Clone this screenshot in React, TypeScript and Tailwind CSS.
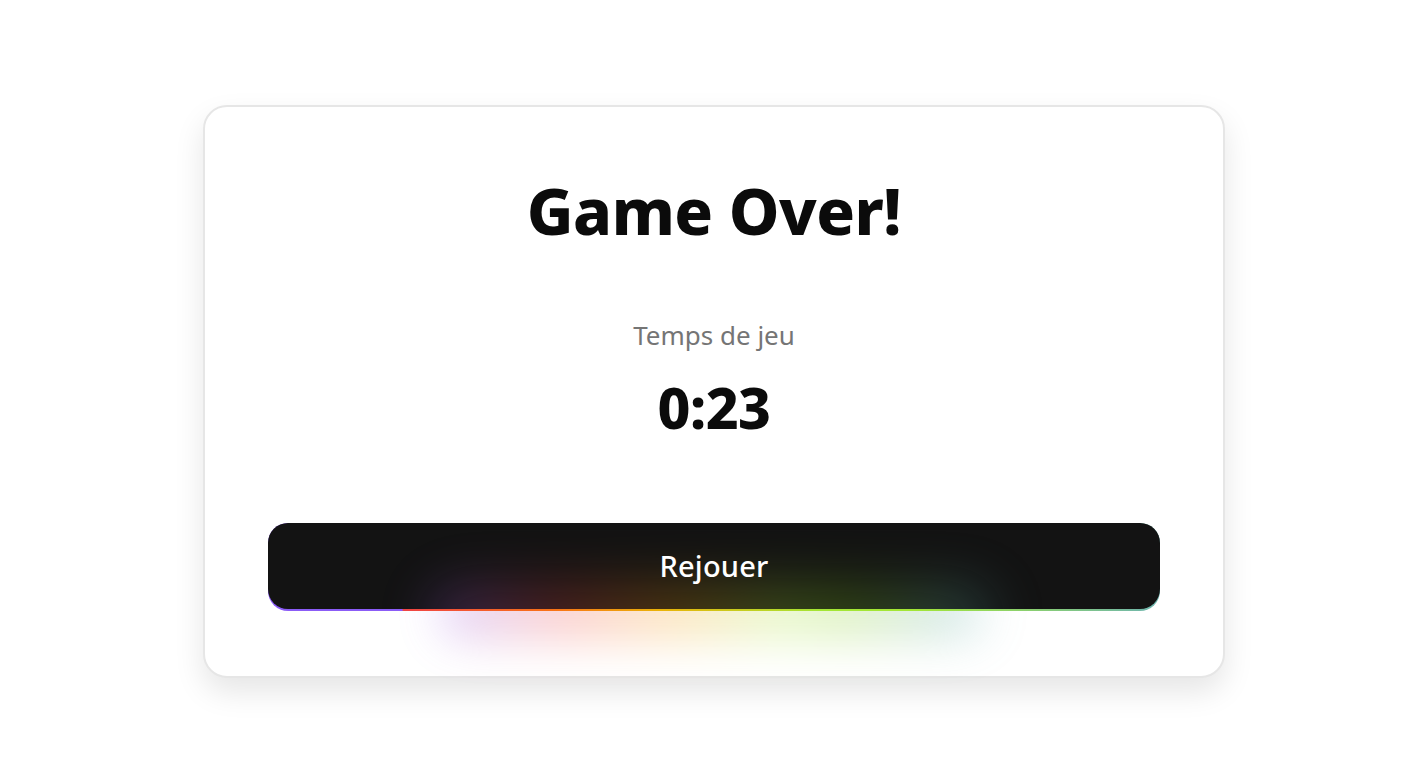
import { FC } from 'react';

const glowBg = "bg-[linear-gradient(90deg,#8b5cf6_0%,#ef4444_22%,#f59e0b_42%,#a3e635_62%,#84cc16_72%,#5eaaa8_92%,transparent_100%)]"

const ReplayButton: FC = () => {
    return (
        <div className="relative">
            {/* glow spilling below the button */}
            <div className={"absolute left-[170px] right-[160px] top-[62px] h-[56px] rounded-full blur-[22px] opacity-25 " + glowBg}></div>
            <div className="relative rounded-[20px] pb-[2px] bg-[linear-gradient(90deg,#8b5cf6_0%,#8b5cf6_15%,#ef4444_15.2%,#f97316_32%,#eab308_44%,#a3e635_62%,#a3e635_72%,#6fb5b0_100%)]">
                <button className="relative w-full h-[86px] rounded-[20px] bg-[#131313] overflow-hidden flex items-center justify-center">
                    <div className={"absolute left-[160px] right-[150px] top-[60px] h-[70px] rounded-full blur-[26px] opacity-25 " + glowBg}></div>
                    <span className="relative text-white text-[29px] font-medium tracking-[0.2px]">Rejouer</span>
                </button>
            </div>
        </div>
    )
}

export default function App() {
    return (
        <div className="min-h-[778px] w-full bg-white flex items-center justify-center pl-[10px] pt-[4px] font-['Noto_Sans',sans-serif]">
            <div className="w-[1022px] rounded-[24px] border-2 border-[#e6e6e6] bg-white shadow-[0_14px_30px_rgba(0,0,0,0.10)] px-[63px] pt-[66px] pb-[65px] flex flex-col items-center">
                <h1 className="text-[64px] leading-[76px] font-extrabold text-[#0b0b0b] tracking-[-0.5px]">Game Over!</h1>
                <div className="mt-[70px] text-[26px] leading-[32px] text-[#757575]">Temps de jeu</div>
                <div className="mt-[26px] text-[57px] leading-[60px] font-extrabold text-[#0b0b0b] tracking-[-0.5px]">0:23</div>
                <div className="w-full mt-[86px]">
                    <ReplayButton />
                </div>
            </div>
        </div>
    )
}
